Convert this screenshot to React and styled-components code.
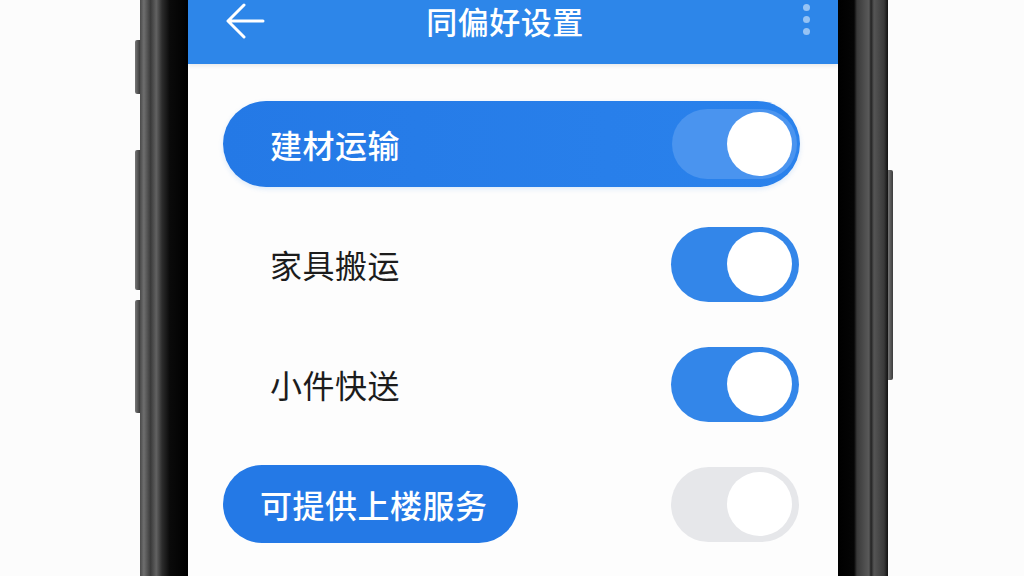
import React from 'react';
import styled, { createGlobalStyle } from 'styled-components';

const GlobalStyle = createGlobalStyle`
  html, body {
    margin: 0;
    padding: 0;
    background: #fcfcfc;
    font-family: "Noto Sans CJK SC", "Noto Sans", sans-serif;
  }
`;

const Page = styled.div`
  width: 1024px;
  height: 576px;
  overflow: hidden;
  display: flex;
  padding-left: 135px;
  box-sizing: border-box;
  background: #fcfcfc;
`;

const Keys = styled.div`
  width: 5px;
  display: flex;
  flex-direction: column;
  padding-top: ${props => props.$top}px;
`;

const Key = styled.div`
  height: ${props => props.$h}px;
  margin-bottom: ${props => props.$gap || 0}px;
  background: linear-gradient(90deg, #777 0%, #3b3b3b 100%);
  border-radius: ${props => props.$right ? '0 2px 2px 0' : '2px 0 0 2px'};
`;

const Bezel = styled.div`
  width: ${props => props.$w}px;
  background: ${props => props.$right
    ? 'linear-gradient(90deg, #000 0%, #050505 32%, #3a3a3a 38%, #5a5a5a 62%, #222 66%, #555 72%, #3a3a3a 92%, #111 100%)'
    : 'linear-gradient(90deg, #4a4a4a 0%, #6e6e6e 8%, #3a3a3a 22%, #626262 34%, #2c2c2c 46%, #0a0a0a 62%, #000 100%)'};
`;

const Screen = styled.div`
  width: 650px;
  background: #fdfdfd;
  display: flex;
  flex-direction: column;
`;

const Header = styled.div`
  height: 64px;
  background: #2d86e9;
  display: grid;
  grid-template-columns: 1fr auto 1fr;
  align-items: start;
  padding: 0 28px 0 38px;
  box-shadow: 0 2px 4px rgba(0, 0, 0, 0.08);
`;

const Back = styled.div`
  padding-top: 3px;
  display: flex;
`;

const Title = styled.div`
  color: #fff;
  font-size: 31px;
  font-weight: 500;
  line-height: 40px;
  padding-top: 1px;
  letter-spacing: 0.5px;
  margin-right: 26px;
`;

const Dots = styled.div`
  justify-self: end;
  display: flex;
  flex-direction: column;
  gap: 5px;
  padding-top: 4px;
`;

const Dot = styled.span`
  width: 7px;
  height: 7px;
  border-radius: 50%;
  background: rgba(255, 255, 255, 0.5);
`;

const List = styled.div`
  display: flex;
  flex-direction: column;
  gap: 34px;
  padding: 37px 38px 0 35px;
`;

const Row = styled.div`
  height: 86px;
  display: flex;
  align-items: center;
  justify-content: space-between;
  padding: ${props => props.$highlight ? '0 3px 0 47px' : props.$bare ? '0 1px 0 0' : '0 1px 0 47px'};
  border-radius: 43px;
  background: ${props => props.$highlight ? 'linear-gradient(90deg, #2479e6, #2a82ec)' : 'transparent'};
  box-shadow: ${props => props.$highlight ? '0 2px 5px rgba(36, 121, 230, 0.15)' : 'none'};
`;

const Label = styled.span`
  font-size: 32px;
  font-weight: ${props => props.$light ? 500 : 400};
  color: ${props => props.$light ? '#fff' : '#1c1c1c'};
  letter-spacing: 0.5px;
`;

const Chip = styled.span`
  height: 78px;
  display: flex;
  align-items: center;
  padding: 0 30px 0 37px;
  border-radius: 39px;
  background: #2479e6;
  color: #fff;
  font-size: 32px;
  font-weight: 500;
  letter-spacing: 0.5px;
`;

const tracks = {
  inset: '#4a94ef',
  on: '#3386e9',
  off: '#e6e7ea',
};

const Track = styled.div`
  width: ${props => props.$kind === 'inset' ? 125 : 128}px;
  height: ${props => props.$kind === 'inset' ? 70 : 75}px;
  border-radius: 38px;
  background: ${props => tracks[props.$kind]};
  display: flex;
  align-items: center;
  justify-content: flex-end;
  padding-right: ${props => props.$kind === 'inset' ? 5 : 7}px;
  box-sizing: border-box;
`;

const Knob = styled.span`
  width: 65px;
  height: 64px;
  border-radius: 50%;
  background: #fff;
`;

const Toggle = ({ kind }) => (
  <Track $kind={kind}>
    <Knob />
  </Track>
);

const ArrowIcon = () => (
  <svg width="40" height="36" viewBox="0 0 40 36" fill="none" stroke="#fff" strokeWidth="3" strokeLinecap="round" strokeLinejoin="round">
    <path d="M37 18H3M18 2L2 18l16 16" />
  </svg>
);

export default function App() {
  return (
    <Page>
      <GlobalStyle />
      <Keys $top={40}>
        <Key $h={54} $gap={56} />
        <Key $h={140} $gap={10} />
        <Key $h={113} />
      </Keys>
      <Bezel $w={48} />
      <Screen>
        <Header>
          <Back><ArrowIcon /></Back>
          <Title>同偏好设置</Title>
          <Dots>
            <Dot />
            <Dot />
            <Dot />
          </Dots>
        </Header>
        <List>
          <Row $highlight>
            <Label $light>建材运输</Label>
            <Toggle kind="inset" />
          </Row>
          <Row>
            <Label>家具搬运</Label>
            <Toggle kind="on" />
          </Row>
          <Row>
            <Label>小件快送</Label>
            <Toggle kind="on" />
          </Row>
          <Row $bare>
            <Chip>可提供上楼服务</Chip>
            <Toggle kind="off" />
          </Row>
        </List>
      </Screen>
      <Bezel $w={50} $right />
      <Keys $top={170}>
        <Key $h={210} $right />
      </Keys>
    </Page>
  );
}
